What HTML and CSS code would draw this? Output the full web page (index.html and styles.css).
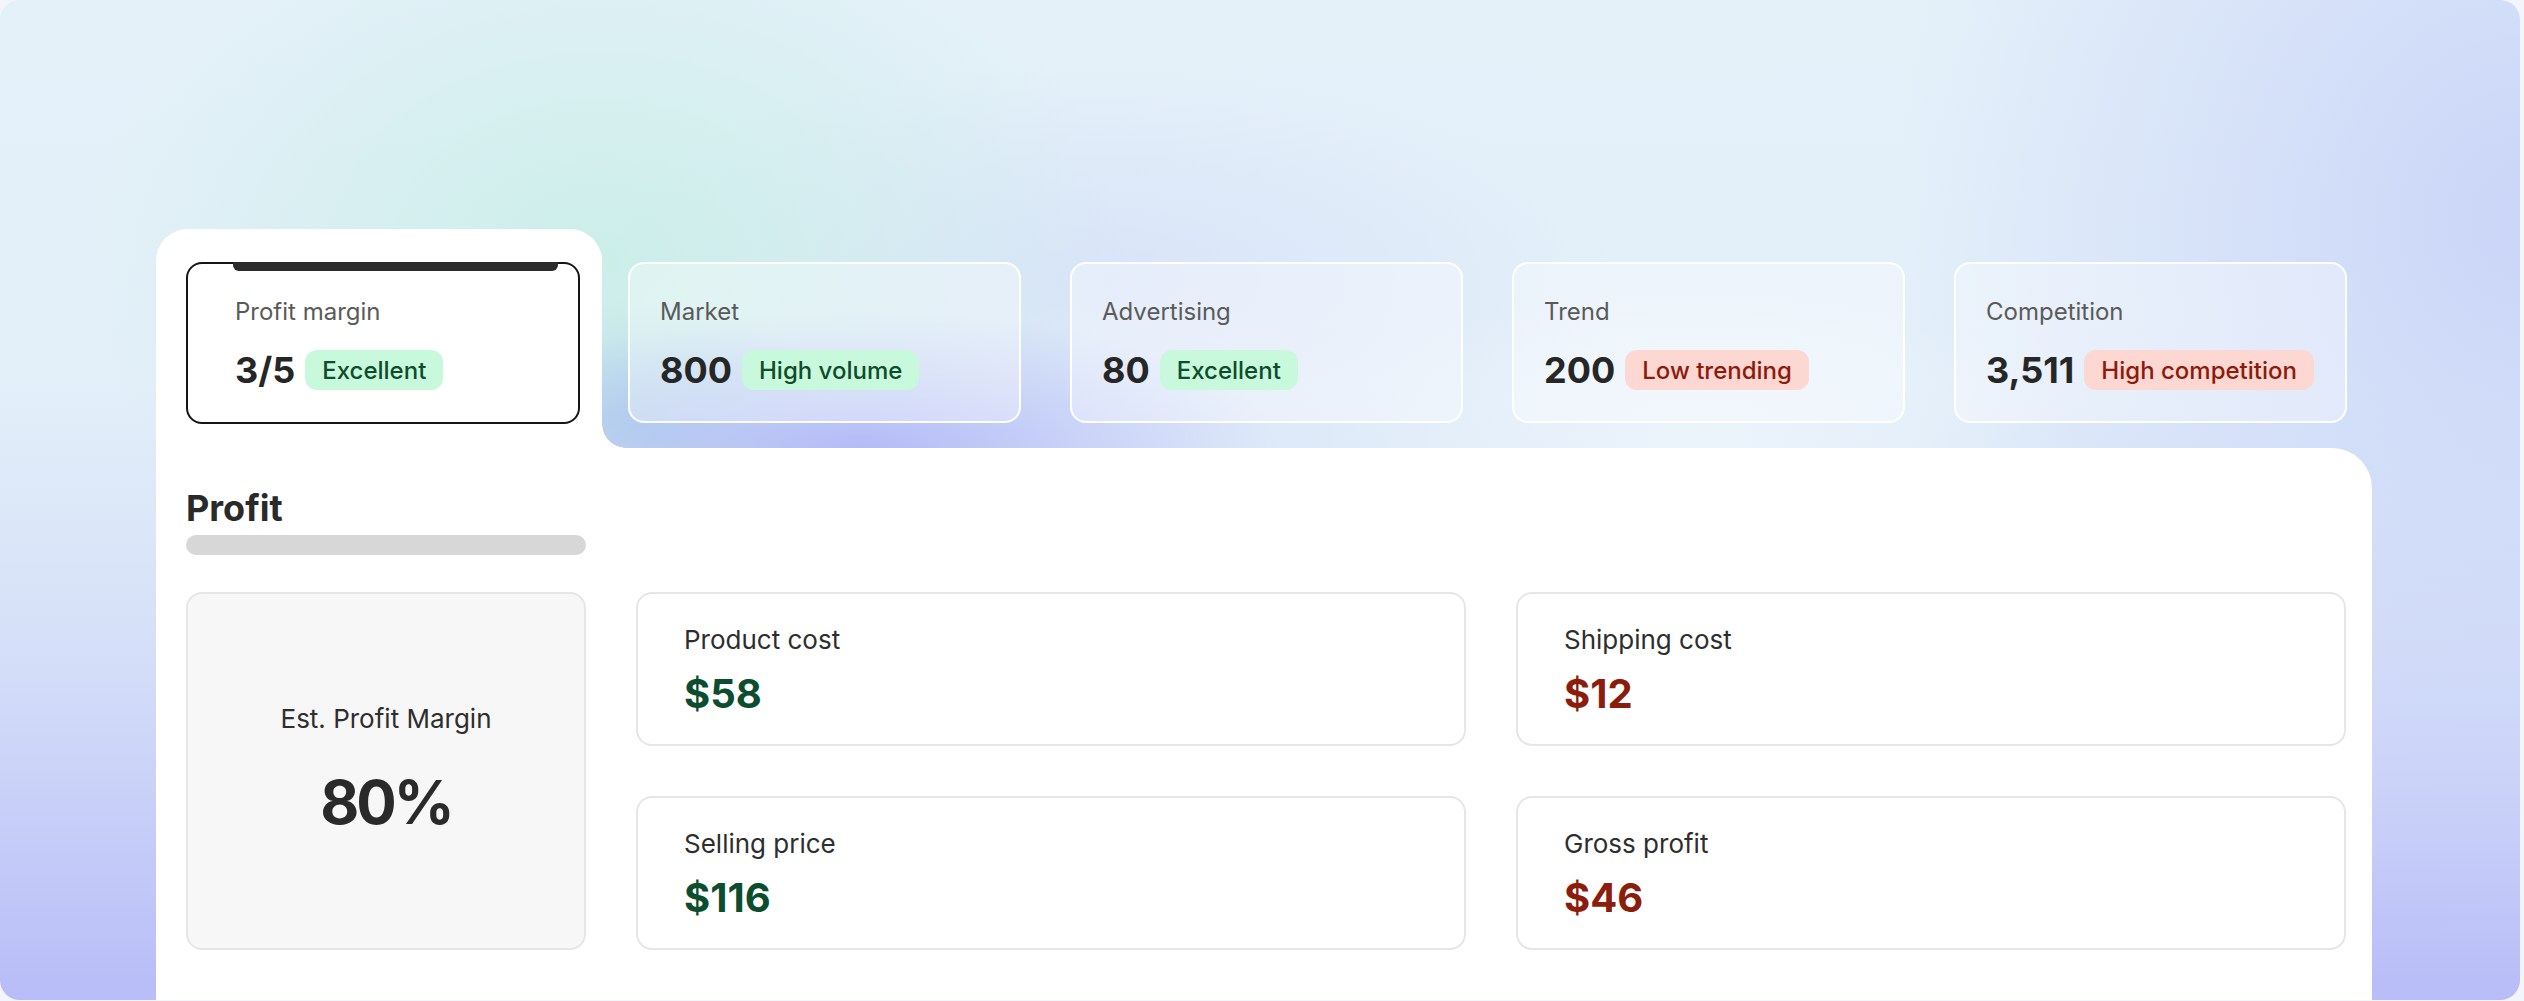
FILE: index.html
```html
<!DOCTYPE html>
<html lang="en">
<head>
<meta charset="utf-8">
<title>Profit overview</title>
<link rel="stylesheet" href="styles.css">
</head>
<body>
<div class="frame">
  <div class="board">
    <div class="top">
      <div class="tab">
        <div class="metric metric--active">
          <span class="metric__bar"></span>
          <div class="metric__label">Profit margin</div>
          <div class="metric__row">
            <span class="metric__value">3/5</span>
            <span class="badge badge--good">Excellent</span>
          </div>
        </div>
      </div>
      <div class="metrics">
        <div class="metric">
          <div class="metric__label">Market</div>
          <div class="metric__row">
            <span class="metric__value">800</span>
            <span class="badge badge--good">High volume</span>
          </div>
        </div>
        <div class="metric">
          <div class="metric__label">Advertising</div>
          <div class="metric__row">
            <span class="metric__value">80</span>
            <span class="badge badge--good">Excellent</span>
          </div>
        </div>
        <div class="metric">
          <div class="metric__label">Trend</div>
          <div class="metric__row">
            <span class="metric__value">200</span>
            <span class="badge badge--bad">Low trending</span>
          </div>
        </div>
        <div class="metric">
          <div class="metric__label">Competition</div>
          <div class="metric__row">
            <span class="metric__value">3,511</span>
            <span class="badge badge--bad">High competition</span>
          </div>
        </div>
      </div>
    </div>
    <div class="panel">
      <h2 class="panel__title">Profit</h2>
      <div class="panel__rule"></div>
      <div class="grid">
        <div class="summary">
          <div class="summary__label">Est. Profit Margin</div>
          <div class="summary__value">80%</div>
        </div>
        <div class="stat">
          <div class="stat__label">Product cost</div>
          <div class="stat__value stat__value--green">$58</div>
        </div>
        <div class="stat">
          <div class="stat__label">Shipping cost</div>
          <div class="stat__value stat__value--red">$12</div>
        </div>
        <div class="stat">
          <div class="stat__label">Selling price</div>
          <div class="stat__value stat__value--green">$116</div>
        </div>
        <div class="stat">
          <div class="stat__label">Gross profit</div>
          <div class="stat__value stat__value--red">$46</div>
        </div>
      </div>
    </div>
  </div>
</div>
</body>
</html>
```

FILE: styles.css
```css
* { box-sizing: border-box; }

html, body {
  margin: 0;
  padding: 0;
}

body {
  background: #f2f6fc;
  font-family: Inter, "Noto Sans", "Liberation Sans", sans-serif;
  color: #2a2a2a;
  width: 2524px;
  height: 1001px;
  overflow: hidden;
}

.frame {
  width: 2520px;
  height: 1000px;
  border-radius: 20px;
  overflow: hidden;
  padding: 229px 0 0 156px;
  background:
    radial-gradient(ellipse 420px 140px at 860px 450px, rgba(180,186,248,1) 0%, rgba(180,186,248,0) 100%),
    radial-gradient(ellipse 200px 120px at 640px 420px, rgba(176,214,232,0.9) 0%, rgba(176,214,232,0) 100%),
    radial-gradient(ellipse 520px 380px at 600px 260px, rgba(202,238,232,0.95) 0%, rgba(202,238,232,0) 100%),
    radial-gradient(ellipse 380px 150px at 1700px 440px, rgba(236,244,251,1) 0%, rgba(236,244,251,0) 100%),
    radial-gradient(ellipse 520px 220px at 1100px 280px, rgba(214,224,248,0.8) 0%, rgba(214,224,248,0) 100%),
    radial-gradient(ellipse 640px 720px at 2524px 220px, rgba(202,213,248,1) 0%, rgba(202,213,248,0) 100%),
    linear-gradient(180deg, #e5f1f9 0%, #e3eff9 38%, #d4def8 66%, #b8bcf8 100%);
}

.board {
  width: 2216px;
}

/* ---------- top row ---------- */
.top {
  display: flex;
  height: 219px;
}

.tab {
  position: relative;
  width: 446px;
  height: 219px;
  background: #fff;
  border-radius: 32px 32px 0 0;
  padding: 33px 22px 0 30px;
}

.tab::after {
  content: "";
  position: absolute;
  left: 100%;
  bottom: 0;
  width: 24px;
  height: 24px;
  background: radial-gradient(circle at 100% 0, rgba(255,255,255,0) 23.5px, #fff 24px);
}

.metrics {
  display: flex;
  gap: 49px;
  padding-top: 33px;
  margin-left: 26px;
}

.metric {
  position: relative;
  width: 393px;
  height: 161px;
  border: 2px solid rgba(255,255,255,0.95);
  border-radius: 16px;
  background: rgba(255,255,255,0.35);
  padding: 33px 20px 0 30px;
}

.metric--active {
  width: 394px;
  height: 162px;
  background: #fff;
  border-color: #151515;
  padding-left: 47px;
}

.metric__bar {
  position: absolute;
  top: -2px;
  left: 45px;
  width: 325px;
  height: 9px;
  background: #2b2b2b;
  border-radius: 0 0 6px 6px;
}

.metric__label {
  font-size: 24px;
  line-height: 30px;
  color: #5a5a5a;
}

.metric__row {
  display: flex;
  align-items: center;
  gap: 10px;
  margin-top: 23px;
}

.metric__value {
  font-size: 36px;
  line-height: 40px;
  font-weight: 700;
  color: #262626;
}

.badge {
  display: inline-flex;
  align-items: center;
  height: 40px;
  padding: 0 17px;
  border-radius: 12px;
  font-size: 24px;
  font-weight: 500;
  white-space: nowrap;
}

.badge--good {
  background: #c9f9dd;
  color: #0e4d2c;
}

.badge--bad {
  background: #fdd7d2;
  color: #8c1b0c;
}

/* ---------- panel ---------- */
.panel {
  background: #fff;
  border-top-right-radius: 40px;
  height: 560px;
  padding: 38px 0 0 30px;
}

.panel__title {
  margin: 0;
  font-size: 36px;
  line-height: 44px;
  font-weight: 700;
  color: #2a2a2a;
}

.panel__rule {
  width: 400px;
  height: 20px;
  margin-top: 5px;
  border-radius: 10px;
  background: #d7d7d7;
}

.grid {
  display: grid;
  grid-template-columns: 400px 830px 830px;
  grid-template-rows: 154px 154px;
  gap: 50px;
  margin-top: 37px;
}

.summary {
  grid-row: 1 / span 2;
  display: flex;
  flex-direction: column;
  align-items: center;
  justify-content: center;
  background: #f7f7f7;
  border: 2px solid #e6e6e6;
  border-radius: 16px;
}

.summary__label {
  font-size: 26px;
  line-height: 30px;
  color: #2e2e2e;
}

.summary__value {
  margin-top: 32px;
  font-size: 60px;
  line-height: 72px;
  font-weight: 700;
  letter-spacing: -3px;
  color: #2a2a2a;
}

.stat {
  border: 2px solid #e6e6e6;
  border-radius: 16px;
  background: #fff;
  padding: 31px 46px 0;
}

.stat__label {
  font-size: 26px;
  line-height: 30px;
  color: #2e2e2e;
}

.stat__value {
  margin-top: 17px;
  font-size: 40px;
  line-height: 44px;
  font-weight: 700;
}

.stat__value--green { color: #0d4d2f; }
.stat__value--red { color: #8b1d0c; }
```
